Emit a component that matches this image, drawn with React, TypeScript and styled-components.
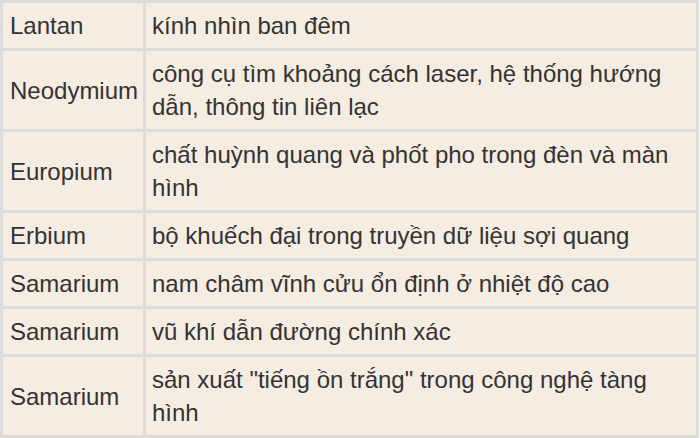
import React from "react";
import styled, { createGlobalStyle } from "styled-components";

const Global = createGlobalStyle`
  html, body { margin: 0; padding: 0; background: #ffffff; }
  body { font-family: "Liberation Sans", Arial, sans-serif; }
`;

const Table = styled.table`
  border-collapse: separate;
  border-spacing: 3px;
  background: #dcdcdc;
  width: 699px;
  table-layout: fixed;
  font-family: "Liberation Sans", Arial, sans-serif;
  font-size: 24px;
  line-height: 33px;
  color: #333333;
`;

const NameCell = styled.td`
  width: 140px;
  box-sizing: border-box;
  background: #f5ece2;
  padding: 6px 7px;
  vertical-align: middle;
`;

const UseCell = styled.td`
  background: #f5ece2;
  padding: 6px 7px 6px 6px;
  vertical-align: middle;
`;

const rows: [string, string][] = [
  ["Lantan", "kính nhìn ban đêm"],
  ["Neodymium", "công cụ tìm khoảng cách laser, hệ thống hướng dẫn, thông tin liên lạc"],
  ["Europium", "chất huỳnh quang và phốt pho trong đèn và màn hình"],
  ["Erbium", "bộ khuếch đại trong truyền dữ liệu sợi quang"],
  ["Samarium", "nam châm vĩnh cửu ổn định ở nhiệt độ cao"],
  ["Samarium", "vũ khí dẫn đường chính xác"],
  ["Samarium", "sản xuất \"tiếng ồn trắng\" trong công nghệ tàng hình"],
];

export default function App() {
  return (
    <>
      <Global />
      <Table>
        <tbody>
          {rows.map(([n, u], i) => (
            <tr key={i}>
              <NameCell>{n}</NameCell>
              <UseCell>{u}</UseCell>
            </tr>
          ))}
        </tbody>
      </Table>
    </>
  );
}
